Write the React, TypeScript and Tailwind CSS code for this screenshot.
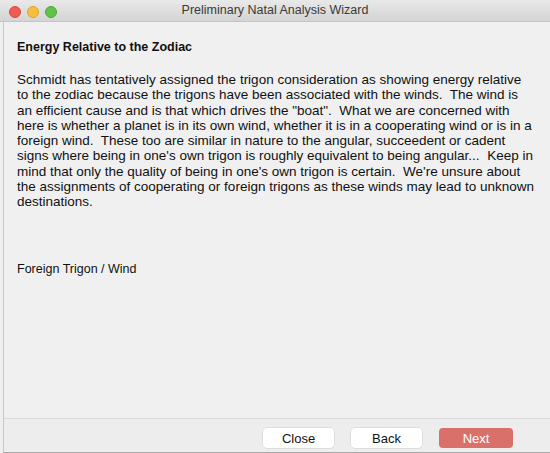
import React from "react";

const lines = [
  "Schmidt has tentatively assigned the trigon consideration as showing energy relative",
  "to the zodiac because the trigons have been associated with the winds.  The wind is",
  "an efficient cause and is that which drives the \"boat\".  What we are concerned with",
  "here is whether a planet is in its own wind, whether it is in a cooperating wind or is in a",
  "foreign wind.  These too are similar in nature to the angular, succeedent or cadent",
  "signs where being in one's own trigon is roughly equivalent to being angular...  Keep in",
  "mind that only the quality of being in one's own trigon is certain.  We're unsure about",
  "the assignments of cooperating or foreign trigons as these winds may lead to unknown",
  "destinations.",
];

export default function App() {
  return (
    <div
      className="w-[550px] h-[453px] flex flex-col bg-[#efefef] text-[#111] overflow-hidden"
      style={{ fontFamily: '"Liberation Sans", Arial, sans-serif' }}
    >
      {/* Title bar */}
      <div className="relative h-[22px] shrink-0 flex items-center justify-center bg-gradient-to-b from-[#e9e9e9] to-[#d4d4d4] border-b border-[#c4c4c4]">
        <div className="absolute left-[9px] top-[6px] flex gap-[6px]">
          <div className="w-[12px] h-[12px] rounded-full bg-[#ee5c56] border border-[#d9483f]" />
          <div className="w-[12px] h-[12px] rounded-full bg-[#f6be3c] border border-[#dfa52a]" />
          <div className="w-[12px] h-[12px] rounded-full bg-[#5fc449] border border-[#4aaa37]" />
        </div>
        <span className="text-[12.5px] text-[#3a3a3a] leading-none">Preliminary Natal Analysis Wizard</span>
      </div>

      {/* Body */}
      <div className="flex-1 flex pl-[3px]">
        <div className="flex-1 flex flex-col border-l border-[#c8c8c8] border-b border-b-[#a8a8a8]">
          <div className="flex-1 flex flex-col pl-[13px] pt-[17px] bg-[#f0f0f0]">
            <div className="text-[12.5px] font-bold leading-[16px]">Energy Relative to the Zodiac</div>
            <div className="mt-[17px] text-[13.5px] leading-[15.3px] whitespace-pre">
              {lines.map((l, i) => (
                <div key={i}>{l}</div>
              ))}
            </div>
            <div className="mt-[51px] text-[12.5px] leading-[16px]">Foreign Trigon / Wind</div>
          </div>
          <div className="h-[34px] shrink-0 border-t border-[#dadada] bg-[#ededed] flex items-start pt-[9px] justify-end pr-[37px] gap-[17px]">
            <button className="w-[71px] h-[20px] rounded-[4px] bg-white text-[13px] leading-none text-[#111] shadow-[0_0_0_0.5px_#d0d0d0]">
              Close
            </button>
            <button className="w-[71px] h-[20px] rounded-[4px] bg-white text-[13px] leading-none text-[#111] shadow-[0_0_0_0.5px_#d0d0d0]">
              Back
            </button>
            <button className="w-[74px] h-[20px] rounded-[4px] bg-[#d9706a] text-[13px] leading-none text-white">
              Next
            </button>
          </div>
        </div>
      </div>
    </div>
  );
}
